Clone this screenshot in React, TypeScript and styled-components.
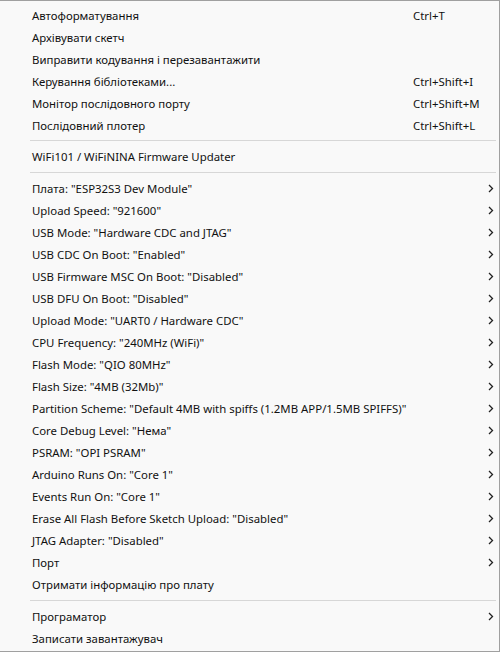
import React from "react";
import styled, { createGlobalStyle } from "styled-components";

const GlobalStyle = createGlobalStyle`
  html, body {
    margin: 0;
    padding: 0;
    background: #ffffff;
  }
  body {
    font-family: "Noto Sans", "Open Sans", "Liberation Sans", sans-serif;
  }
`;

const Menu = styled.div`
  width: 500px;
  height: 652px;
  box-sizing: border-box;
  background: #f9f9f9;
  border-top: 1px solid #a0a0a0;
  border-right: 1px solid #a0a0a0;
  border-bottom: 1px solid #a0a0a0;
  padding: 3px 0 2px 0;
  display: flex;
  flex-direction: column;
`;

const Item = styled.div`
  height: 22px;
  display: grid;
  grid-template-columns: minmax(0, 1fr) 72px 14px;
  align-items: center;
  padding-left: 32px;
  font-size: 11.4px;
  color: #111111;
  white-space: nowrap;
`;

const Label = styled.span``;

const Shortcut = styled.span`
  color: #111111;
`;

const Arrow = styled.span`
  display: flex;
  align-items: center;
  padding-left: 3px;
`;

const Separator = styled.div<{ $h: number }>`
  height: ${(p) => p.$h}px;
  display: flex;
  align-items: center;
  padding-left: 30px;
  padding-right: 3px;
  &::after {
    content: "";
    flex: 1;
    height: 1px;
    background: #d7d7d7;
  }
`;

type Entry =
  | { kind: "item"; label: string; shortcut?: string; sub?: boolean }
  | { kind: "sep"; h: number };

const entries: Entry[] = [
  { kind: "item", label: "Автоформатування", shortcut: "Ctrl+T" },
  { kind: "item", label: "Архівувати скетч" },
  { kind: "item", label: "Виправити кодування і перезавантажити" },
  { kind: "item", label: "Керування бібліотеками...", shortcut: "Ctrl+Shift+I" },
  { kind: "item", label: "Монітор послідовного порту", shortcut: "Ctrl+Shift+M" },
  { kind: "item", label: "Послідовний плотер", shortcut: "Ctrl+Shift+L" },
  { kind: "sep", h: 9 },
  { kind: "item", label: "WiFi101 / WiFiNINA Firmware Updater" },
  { kind: "sep", h: 10 },
  { kind: "item", label: 'Плата: "ESP32S3 Dev Module"', sub: true },
  { kind: "item", label: 'Upload Speed: "921600"', sub: true },
  { kind: "item", label: 'USB Mode: "Hardware CDC and JTAG"', sub: true },
  { kind: "item", label: 'USB CDC On Boot: "Enabled"', sub: true },
  { kind: "item", label: 'USB Firmware MSC On Boot: "Disabled"', sub: true },
  { kind: "item", label: 'USB DFU On Boot: "Disabled"', sub: true },
  { kind: "item", label: 'Upload Mode: "UART0 / Hardware CDC"', sub: true },
  { kind: "item", label: 'CPU Frequency: "240MHz (WiFi)"', sub: true },
  { kind: "item", label: 'Flash Mode: "QIO 80MHz"', sub: true },
  { kind: "item", label: 'Flash Size: "4MB (32Mb)"', sub: true },
  {
    kind: "item",
    label: 'Partition Scheme: "Default 4MB with spiffs (1.2MB APP/1.5MB SPIFFS)"',
    sub: true,
  },
  { kind: "item", label: 'Core Debug Level: "Нема"', sub: true },
  { kind: "item", label: 'PSRAM: "OPI PSRAM"', sub: true },
  { kind: "item", label: 'Arduino Runs On: "Core 1"', sub: true },
  { kind: "item", label: 'Events Run On: "Core 1"', sub: true },
  { kind: "item", label: 'Erase All Flash Before Sketch Upload: "Disabled"', sub: true },
  { kind: "item", label: 'JTAG Adapter: "Disabled"', sub: true },
  { kind: "item", label: "Порт", sub: true },
  { kind: "item", label: "Отримати інформацію про плату" },
  { kind: "sep", h: 10 },
  { kind: "item", label: "Програматор", sub: true },
  { kind: "item", label: "Записати завантажувач" },
];

const Chevron: React.FC = () => (
  <svg width="6" height="9" viewBox="0 0 6 9">
    <polyline
      points="1,1 4.5,4.5 1,8"
      fill="none"
      stroke="#222"
      strokeWidth="1.3"
    />
  </svg>
);

const App: React.FC = () => {
  return (
    <>
      <GlobalStyle />
      <Menu>
        {entries.map((e, i) =>
          e.kind === "sep" ? (
            <Separator key={i} $h={e.h} />
          ) : (
            <Item key={i}>
              <Label>{e.label}</Label>
              <Shortcut>{e.shortcut || ""}</Shortcut>
              <Arrow>{e.sub ? <Chevron /> : null}</Arrow>
            </Item>
          )
        )}
      </Menu>
    </>
  );
};

export default App;
